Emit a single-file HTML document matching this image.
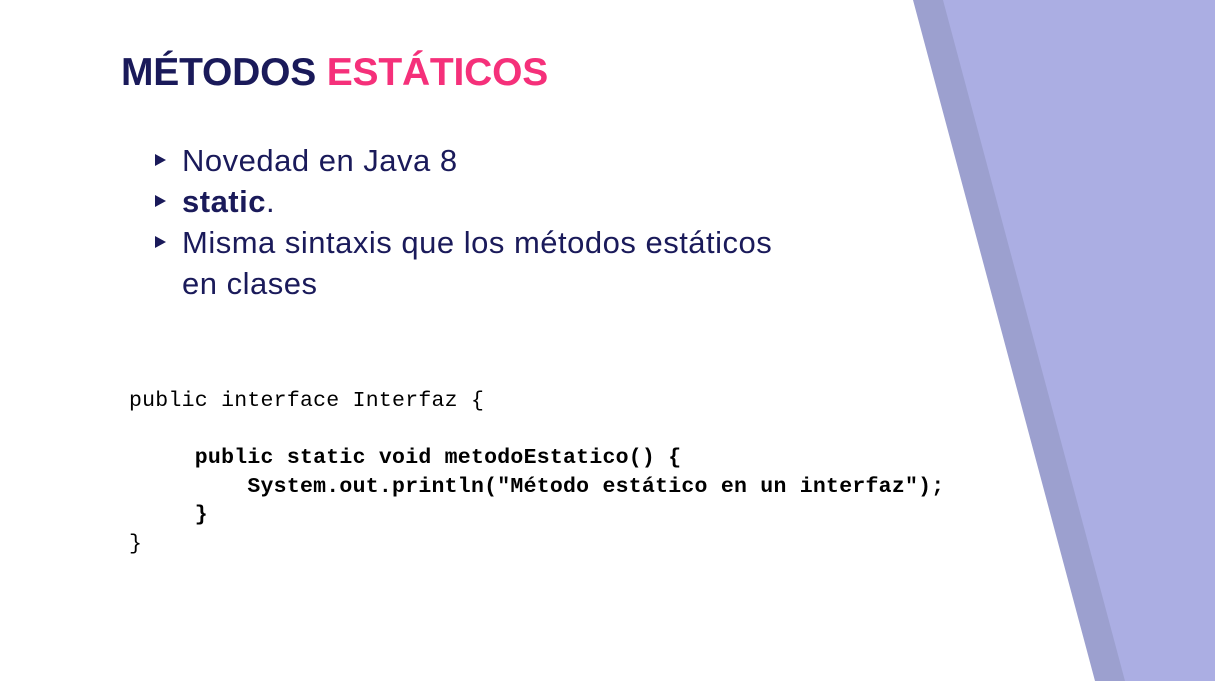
<!DOCTYPE html>
<html><head><meta charset="utf-8"><style>
html,body{margin:0;padding:0}
body{width:1215px;height:681px;position:relative;overflow:hidden;background:#fff;font-family:"Liberation Sans",sans-serif}
svg.bg{position:absolute;left:0;top:0}
h1{position:absolute;left:121px;top:48px;margin:0;font-size:39px;font-weight:bold;color:#1a1a5a;white-space:nowrap;letter-spacing:-0.2px;line-height:50px}
h1 span{color:#f5307a}
ul{position:absolute;left:150px;top:140px;margin:0;padding:0;list-style:none;color:#1a1a5a;font-size:31px;line-height:41px;letter-spacing:0.5px;white-space:nowrap}
li{position:relative;padding-left:32px}
li.t::before{content:"";position:absolute;left:5px;top:14px;border-left:11px solid #1a1a5a;border-top:6px solid transparent;border-bottom:6px solid transparent}
pre{position:absolute;left:129px;top:387px;margin:0;font-family:"Liberation Mono",monospace;font-size:21.5px;letter-spacing:0.25px;line-height:28.6px;color:#000}
</style></head><body>
<svg class="bg" width="1215" height="681"><polygon points="913,0 1215,0 1215,681 1095,681" fill="#9ca0cf"/><polygon points="943,0 1215,0 1215,681 1125,681" fill="#abaee3"/></svg>
<h1>MÉTODOS <span>ESTÁTICOS</span></h1>
<ul>
<li class="t">Novedad en Java 8</li>
<li class="t"><b>static</b>.</li>
<li class="t">Misma sintaxis que los métodos estáticos</li>
<li>en clases</li>
</ul>
<pre>public interface Interfaz {

<b>     public static void metodoEstatico() {
         System.out.println("Método estático en un interfaz");
     }</b>
}</pre>
</body></html>
